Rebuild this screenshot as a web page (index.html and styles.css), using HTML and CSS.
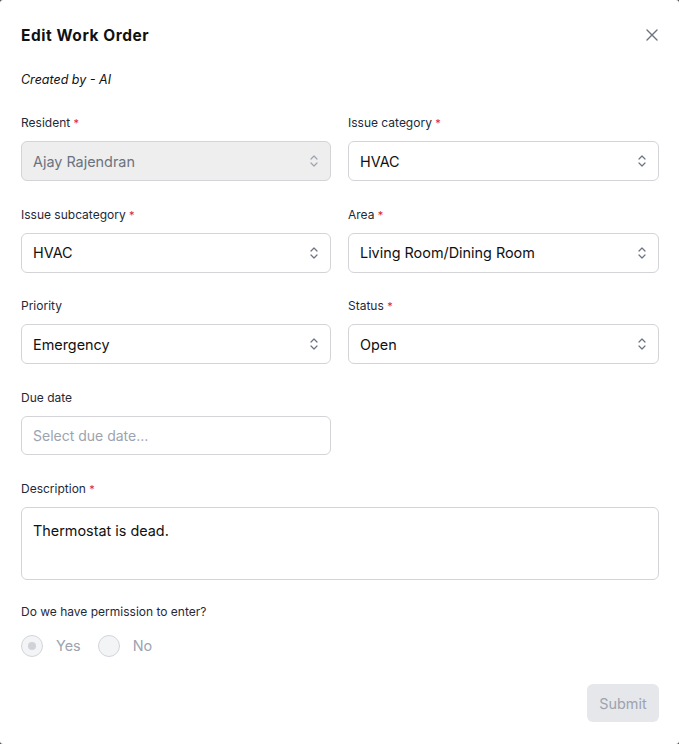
FILE: index.html
```html
<!DOCTYPE html>
<html>
<head>
  <meta charset="utf-8">
  <title>Edit Work Order</title>
  <meta name="viewport" content="width=device-width, initial-scale=1">
  <link rel="stylesheet" href="styles.css">
</head>
<body>
  <div class="modal">
    <div class="modal-header">
      <h1 class="modal-title">Edit Work Order</h1>
      <button class="close-btn" aria-label="Close">
        <svg width="14" height="14" viewBox="0 0 14 14"><path d="M2 2L12 12M12 2L2 12" stroke="#6b7280" stroke-width="1.4" stroke-linecap="round"/></svg>
      </button>
    </div>
    <p class="created-by">Created by - AI</p>

    <div class="form-grid">
      <div class="field">
        <label class="field-label">Resident <span class="req">*</span></label>
        <div class="select disabled">
          <span>Ajay Rajendran</span>
          <svg class="chev" width="10" height="14" viewBox="0 0 10 14"><path d="M2 5L5 2L8 5M2 9L5 12L8 9" fill="none" stroke="#9ca3af" stroke-width="1.2" stroke-linecap="round" stroke-linejoin="round"/></svg>
        </div>
      </div>
      <div class="field">
        <label class="field-label">Issue category <span class="req">*</span></label>
        <div class="select">
          <span>HVAC</span>
          <svg class="chev" width="10" height="14" viewBox="0 0 10 14"><path d="M2 5L5 2L8 5M2 9L5 12L8 9" fill="none" stroke="#6b7280" stroke-width="1.2" stroke-linecap="round" stroke-linejoin="round"/></svg>
        </div>
      </div>
      <div class="field">
        <label class="field-label">Issue subcategory <span class="req">*</span></label>
        <div class="select">
          <span>HVAC</span>
          <svg class="chev" width="10" height="14" viewBox="0 0 10 14"><path d="M2 5L5 2L8 5M2 9L5 12L8 9" fill="none" stroke="#6b7280" stroke-width="1.2" stroke-linecap="round" stroke-linejoin="round"/></svg>
        </div>
      </div>
      <div class="field">
        <label class="field-label">Area <span class="req">*</span></label>
        <div class="select">
          <span>Living Room/Dining Room</span>
          <svg class="chev" width="10" height="14" viewBox="0 0 10 14"><path d="M2 5L5 2L8 5M2 9L5 12L8 9" fill="none" stroke="#6b7280" stroke-width="1.2" stroke-linecap="round" stroke-linejoin="round"/></svg>
        </div>
      </div>
      <div class="field">
        <label class="field-label">Priority</label>
        <div class="select">
          <span>Emergency</span>
          <svg class="chev" width="10" height="14" viewBox="0 0 10 14"><path d="M2 5L5 2L8 5M2 9L5 12L8 9" fill="none" stroke="#6b7280" stroke-width="1.2" stroke-linecap="round" stroke-linejoin="round"/></svg>
        </div>
      </div>
      <div class="field">
        <label class="field-label">Status <span class="req">*</span></label>
        <div class="select">
          <span>Open</span>
          <svg class="chev" width="10" height="14" viewBox="0 0 10 14"><path d="M2 5L5 2L8 5M2 9L5 12L8 9" fill="none" stroke="#6b7280" stroke-width="1.2" stroke-linecap="round" stroke-linejoin="round"/></svg>
        </div>
      </div>
      <div class="field">
        <label class="field-label">Due date</label>
        <div class="select date">
          <span class="placeholder">Select due date...</span>
        </div>
      </div>
      <div class="field"></div>
      <div class="field wide">
        <label class="field-label">Description <span class="req">*</span></label>
        <div class="textarea">Thermostat is dead.</div>
      </div>
    </div>

    <div class="permission">
      <p class="field-label">Do we have permission to enter?</p>
      <div class="radio-row">
        <label class="radio checked"><span class="radio-dot"></span>Yes</label>
        <label class="radio"><span class="radio-dot"></span>No</label>
      </div>
    </div>

    <div class="modal-footer">
      <button class="submit-btn" disabled>Submit</button>
    </div>
  </div>
</body>
</html>
```

FILE: styles.css
```css
/* page */
html, body {
  margin: 0;
  padding: 0;
  background: #4b4b4b;
}

body {
  font-family: Inter, "Liberation Sans", sans-serif;
  color: #111827;
}

.modal {
  background: #fff;
  width: 679px;
  height: 744px;
  box-sizing: border-box;
  padding: 24px 20px 22px 21px;
  border-radius: 3px;
  display: flex;
  flex-direction: column;
}

/* header */
.modal-header {
  display: flex;
  align-items: center;
  justify-content: space-between;
  height: 22px;
}

.modal-title {
  margin: 0;
  font-size: 15.5px;
  font-weight: 700;
  letter-spacing: 0.55px;
  color: #111;
}

.close-btn {
  border: 0;
  background: transparent;
  padding: 0;
  width: 14px;
  height: 14px;
  display: flex;
  cursor: pointer;
}

.created-by {
  margin: 24px 0 0;
  font-size: 12.5px;
  line-height: 20px;
  font-style: italic;
  color: #111;
}

/* fields */
.form-grid {
  margin-top: 23px;
  display: grid;
  grid-template-columns: 310px 311px;
  column-gap: 17px;
  row-gap: 23.7px;
}

.field.wide {
  grid-column: 1 / 3;
}

.field-label {
  display: block;
  margin: 0 0 8px;
  font-size: 12px;
  line-height: 20px;
  color: #1f2937;
}

.req {
  color: #dc2626;
  font-size: 11px;
  vertical-align: top;
}

.select {
  height: 40px;
  box-sizing: border-box;
  border: 1px solid #d4d4d8;
  border-radius: 6px;
  padding: 0 11px;
  display: flex;
  align-items: center;
  justify-content: space-between;
  font-size: 14.4px;
  color: #111;
}

.select.disabled {
  background: #eeeeee;
  color: #6b7280;
}

.select.date {
  height: 39px;
}

.placeholder {
  color: #9ca3af;
  font-size: 14px;
}

.textarea {
  height: 73px;
  box-sizing: border-box;
  border: 1px solid #d4d4d8;
  border-radius: 6px;
  padding: 14px 11px;
  font-size: 14.4px;
  color: #111;
}

/* radios */
.permission {
  margin-top: 22px;
}

.permission .field-label {
  margin-bottom: 12px;
}

.radio-row {
  display: flex;
  gap: 17px;
  height: 24px;
  align-items: center;
}

.radio {
  display: flex;
  align-items: center;
  gap: 13px;
  font-size: 14.4px;
  color: #9ca3af;
}

.radio-dot {
  width: 22px;
  height: 22px;
  box-sizing: border-box;
  border-radius: 50%;
  border: 1px solid #d1d5db;
  background: #f3f4f6;
  display: flex;
  align-items: center;
  justify-content: center;
}

.radio.checked .radio-dot::after {
  content: "";
  width: 8px;
  height: 8px;
  border-radius: 50%;
  background: #cfd3d9;
}

/* footer */
.modal-footer {
  margin-top: auto;
  display: flex;
  justify-content: flex-end;
}

.submit-btn {
  width: 72px;
  height: 38px;
  border: 0;
  border-radius: 6px;
  background: #e5e7eb;
  color: #9ca3af;
  font-family: inherit;
  font-size: 14.4px;
}
```
